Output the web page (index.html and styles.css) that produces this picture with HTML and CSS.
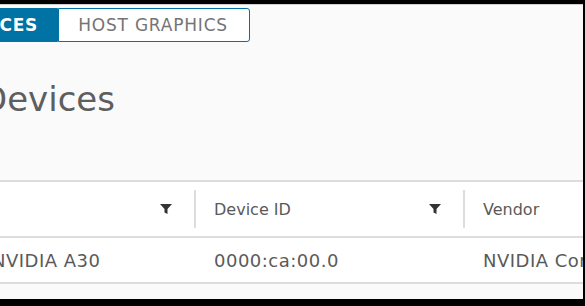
FILE: index.html
```html
<!DOCTYPE html>
<html lang="en">
<head>
  <meta charset="UTF-8" />
  <title>Graphics</title>
  <link rel="stylesheet" href="styles.css">
</head>
<body>
  <div class="screen">
    <div class="tabs">
      <button class="tab active">DEVICES</button>
      <button class="tab">HOST GRAPHICS</button>
    </div>

    <h1 class="title">Devices</h1>

    <div class="grid">
      <div class="row head">
        <div class="cell c1">
          <span>Name</span>
          <svg class="filter" viewBox="0 0 12 12"><path d="M0 1h12L7.5 6v5L4.5 9.5V6z"/></svg>
        </div>
        <div class="cell c2">
          <span>Device ID</span>
          <svg class="filter" viewBox="0 0 12 12"><path d="M0 1h12L7.5 6v5L4.5 9.5V6z"/></svg>
        </div>
        <div class="cell c3">
          <span>Vendor</span>
        </div>
      </div>
      <div class="row">
        <div class="cell c1">NVIDIA A30</div>
        <div class="cell c2">0000:ca:00.0</div>
        <div class="cell c3">NVIDIA Corporation</div>
      </div>
    </div>
  </div>
</body>
</html>
```

FILE: styles.css
```css
* {
  box-sizing: border-box;
}
html, body {
  margin: 0;
  padding: 0;
  height: 100%;
  background: #000;
  overflow: hidden;
}
.screen {
  margin: 4px 2px 0 0;
  height: 295px;
  background: #fafafa;
  border-top: 1px solid #d0d0d0;
  font-family: "DejaVu Sans", "Liberation Sans", sans-serif;
  color: #5a5a5a;
  overflow: hidden;
}
.tabs {
  display: flex;
  margin: 3px 0 0 -69px;
}
.tab {
  height: 34px;
  padding: 0 19px;
  font-family: inherit;
  font-size: 17px;
  letter-spacing: 0.8px;
  background: #fff;
  color: #747474;
  border: 1px solid #0072a3;
}
.tab.active {
  background: #0072a3;
  color: #fff;
  font-weight: bold;
  border-radius: 3px 0 0 3px;
}
.tab:last-child {
  border-radius: 0 3px 3px 0;
  padding: 0 21px 0 19px;
}
.title {
  margin: 37px 0 0 -19px;
  font-size: 34px;
  font-weight: normal;
  color: #5e5e5e;
  line-height: 40px;
}
.grid {
  margin-top: 61px;
  background: #fff;
  border-top: 2px solid #ddd;
}
.row {
  display: flex;
  height: 46px;
  border-bottom: 2px solid #ddd;
  align-items: center;
  font-size: 18px;
  letter-spacing: 0.5px;
}
.row.head {
  height: 56px;
  font-size: 16px;
  letter-spacing: 0;
}
.cell {
  display: flex;
  align-items: center;
  padding-left: 18px;
  white-space: nowrap;
  flex-shrink: 0;
}
.c1 {
  width: 194px;
  padding-left: 0;
  text-indent: -8px;
}
.c2 {
  width: 269px;
}
.c3 {
  flex: 1;
  min-width: 0;
  overflow: hidden;
}
.head .cell {
  height: 38px;
}
.head .c2, .head .c3 {
  border-left: 2px solid #ddd;
}
.row:not(.head) .c2, .row:not(.head) .c3 {
  padding-left: 20px;
}
.head .c1 span {
  visibility: hidden;
}
.filter {
  width: 12px;
  height: 12px;
  fill: #333;
  margin-left: auto;
  margin-right: 22px;
}
```
